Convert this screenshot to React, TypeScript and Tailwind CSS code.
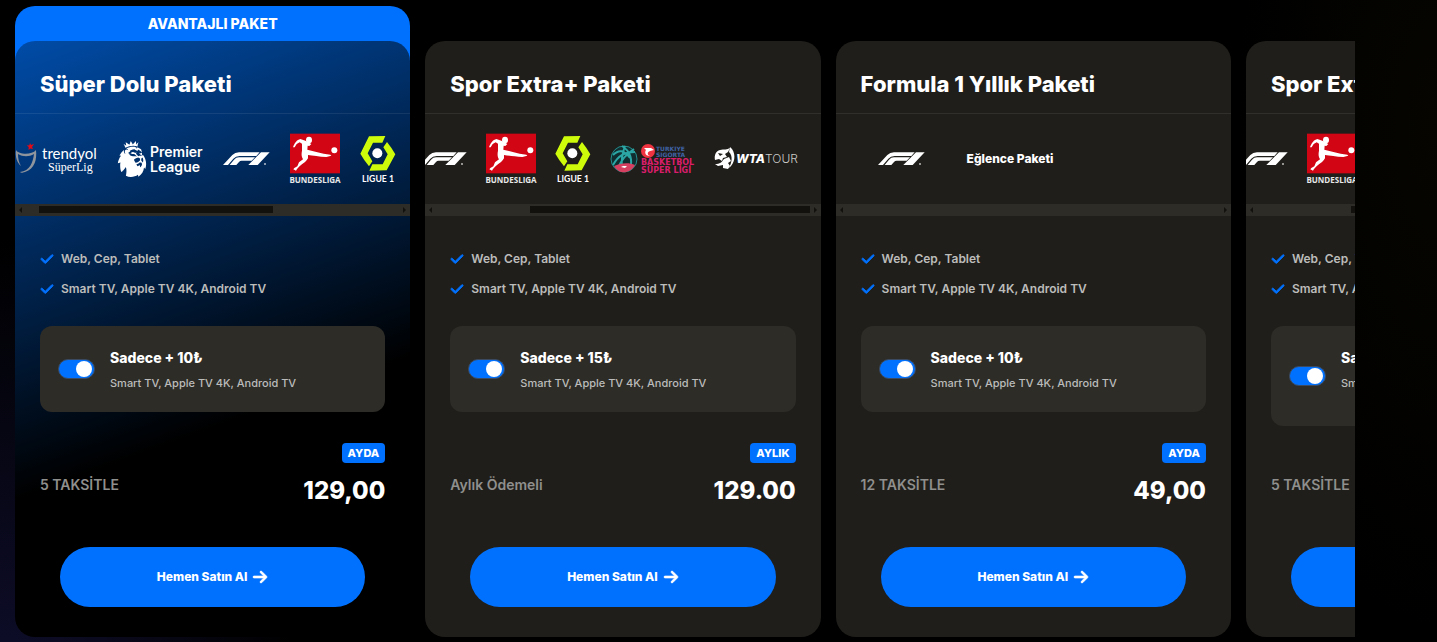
import { useId } from "react";
import type { ReactNode } from "react";
import { FaArrowRight, FaCheck } from "react-icons/fa6";
import { SiPremierleague } from "react-icons/si";

function TrendyolLogo() {
  return (
    <svg viewBox="0 0 83 34" className="h-[34px] w-[83px] shrink-0 overflow-visible" role="img" aria-label="Trendyol Süper Lig">
      <path d="M1 8 C4 13 17 13 21 8 C22 17 20 27 10 30 C7 31 6 31 5 30 C15 29 18 20 19 12 C14 15 8 15 3 12 C3 17 4 21 6 24 C2 21 0 14 1 8 Z" fill="#8f959d" />
      <path d="m15 1 1 2 3-1-2 3 1 2-2.500-.5-2 1.500.200-3-2-1.500 2.600-.3z" fill="#e30a17" />
      <text x="27" y="17" fontSize="15" fill="#fff" fontFamily="Lato, sans-serif">trendyol</text>
      <text x="33" y="29" fontSize="12" fill="#fff" fontFamily="'Liberation Serif', serif">SüperLig</text>
    </svg>
  );
}

function PremierLeagueLogo() {
  return (
    <div className="flex w-[85px] shrink-0 items-center text-white" role="img" aria-label="Premier League">
      <SiPremierleague className="-ml-1 size-9 shrink-0" />
      <span className="text-[14px] leading-[15px] font-semibold">
        Premier
        <br />
        League
      </span>
    </div>
  );
}

function FormulaLogo() {
  return (
    <svg viewBox="0 0 141 40" className="h-[14px] w-[47px] shrink-0" fill="#fff" role="img" aria-label="Formula 1">
      <path d="M0 38 28 8Q36 0 48 0H110L100 11H50Q38 11 31 19L15 38Z" />
      <path d="M20 38 33 22Q39 15 48 15H96L86 25H56Q51 25 48 29L40 38Z" />
      <path d="M114 0H140L104 38H76Z" />
      <circle cx="126" cy="35" r="3" opacity=".7" />
    </svg>
  );
}

function BundesligaLogo() {
  return (
    <svg viewBox="0 0 150 156" className="h-[52px] w-[50px] shrink-0 overflow-visible" role="img" aria-label="Bundesliga">
      <rect y="2" width="150" height="119" fill="#d20515" />
      <g fill="#fff" transform="translate(0 2)">
        <ellipse cx="57" cy="19" rx="9" ry="10" />
        <path d="M9 41 C13 29 21 18 31 16 L46 21 Q55 25 64 31 L58 37 L53 36 L52 48 C68 51 84 57 101 60 L121 63 L124 66 L109 70 C88 69 68 66 54 64 L54 74 C49 83 42 88 34 93 C29 96 25 102 21 106 L18 111 L10 107 L13 103 L22 98 L27 86 L39 77 C34 69 34 60 36 51 L36 30 L29 26 L20 31 L14 41 Z" />
        <circle cx="133" cy="50" r="9" />
      </g>
      <text x="75" y="151" textAnchor="middle" fontSize="24" fontWeight="700" fill="#e8e8e8" fontFamily="'Open Sans', sans-serif">BUNDESLIGA</text>
    </svg>
  );
}

function LigueLogo() {
  return (
    <svg viewBox="0 0 108 141" className="h-[47px] w-9 shrink-0 overflow-visible" role="img" aria-label="Ligue 1">
      <g fill="#cdfb0a">
        <path d="M27 1 76 0 67 20H39L23 52 37 76 27 91Q13 74 1 53Z" />
        <path d="M81 18Q94 34 106 55L80 103 28 104 37 85H68L83 55 70 34Z" />
      </g>
      <circle cx="52" cy="52" r="15" fill="#fff" />
      <text x="54" y="137" textAnchor="middle" fontSize="26" fontWeight="700" fill="#fff" fontFamily="Lato, sans-serif">LIGUE 1</text>
    </svg>
  );
}

function BasketbolLogo() {
  return (
    <svg viewBox="0 0 85 30" className="h-[30px] w-[85px] shrink-0 overflow-visible" role="img" aria-label="Türkiye Sigorta Basketbol Süper Ligi">
      <circle cx="14" cy="15" r="13" fill="#102d30" stroke="#248d8d" />
      <path d="M3 11C9 5 14 6 20 14M3 21C8 12 14 8 25 8M12 2C20 7 23 15 20 26M8 24C11 17 16 10 24 5M15 2C12 10 11 15 12 23" stroke="#2ba6a4" strokeWidth="2" fill="none" />
      <path d="M4 22C10 19 19 18 25 21C20 30 9 31 4 22Z" fill="#d84061" />
      <path d="m11 23 2-1h4l-2 2z" fill="#fff" />
      <circle cx="38" cy="7" r="7" fill="#ef3340" />
      <path d="M34 4h7l3 2-4 1c-3 1-3 4 0 5-4 0-6-3-4-6z" fill="#fff" />
      <g fontFamily="'DejaVu Sans', sans-serif" fontWeight="700">
        <text x="46" y="7" fontSize="6" fill="#3f63a6">TURKIYE</text>
        <text x="46" y="13" fontSize="6" fill="#3f63a6">SIGORTA</text>
        <text x="31" y="21" fontSize="8" fill="#d91d6b">BASKETBOL</text>
        <text x="31" y="29" fontSize="8" fill="#d91d6b">SÜPER LİGİ</text>
      </g>
    </svg>
  );
}

function WtaLogo() {
  return (
    <svg viewBox="0 0 84 24" className="h-6 w-[84px] shrink-0 overflow-visible" fill="#fff" role="img" aria-label="WTA Tour">
      <path d="M6 3C10 2 13 3 16 1L14 5L11 7L13 10L9 11L8 14L5 12L1 13C0 8 2 4 6 3Z" />
      <path d="M1 17C6 17 8 15 10 12L15 10L17 14L14 16L16 19L14 22L9 21L9 18L4 19Z" />
      <path d="M16 0 18 2C22 8 21 16 15 21C18 15 19 9 15 5Z" />
      <path d="m4 6 5 1-3 2z" fill="#1f1e1a" />
      <text x="22" y="16" fontSize="12" fontWeight="800" fontStyle="italic" fontFamily="Inter, sans-serif">WTA</text>
      <text x="51" y="16" fontSize="12" fontWeight="300" fill="#c9c8c6" fontFamily="Inter, sans-serif">TOUR</text>
    </svg>
  );
}

type Plan = {
  title: string;
  featured?: boolean;
  logos: ReactNode;
  thumb?: { left: number; width: number };
  extraPrice: string;
  extraDevices: string;
  tallExtra?: boolean;
  terms: string;
  period: string;
  price: string;
};

const sportLogos = (
  <div className="-ml-[5px] flex items-center gap-[19px]">
    <FormulaLogo />
    <BundesligaLogo />
    <LigueLogo />
    <BasketbolLogo />
    <WtaLogo />
  </div>
);

const plans: Plan[] = [
  {
    title: "Süper Dolu Paketi",
    featured: true,
    logos: (
      <div className="flex items-center gap-5">
        <TrendyolLogo />
        <PremierLeagueLogo />
        <FormulaLogo />
        <BundesligaLogo />
        <LigueLogo />
      </div>
    ),
    thumb: { left: 6, width: 59.2 },
    extraPrice: "Sadece + 10₺",
    extraDevices: "Smart TV, Apple TV 4K, Android TV",
    terms: "5 TAKSİTLE",
    period: "AYDA",
    price: "129,00",
  },
  {
    title: "Spor Extra+ Paketi",
    logos: sportLogos,
    thumb: { left: 26.6, width: 70.8 },
    extraPrice: "Sadece + 15₺",
    extraDevices: "Smart TV, Apple TV 4K, Android TV",
    terms: "Aylık Ödemeli",
    period: "AYLIK",
    price: "129.00",
  },
  {
    title: "Formula 1 Yıllık Paketi",
    logos: (
      <div className="flex items-center gap-[42px] pl-[42px]">
        <FormulaLogo />
        <span className="text-[12px] font-extrabold text-white">Eğlence Paketi</span>
      </div>
    ),
    extraPrice: "Sadece + 10₺",
    extraDevices: "Smart TV, Apple TV 4K, Android TV",
    terms: "12 TAKSİTLE",
    period: "AYDA",
    price: "49,00",
  },
  {
    title: "Spor Extra+ Paketi",
    logos: sportLogos,
    thumb: { left: 26.6, width: 70.8 },
    extraPrice: "Sadece + 10₺",
    extraDevices: "Smart TV, Apple TV 4K, Android TV",
    tallExtra: true,
    terms: "5 TAKSİTLE",
    period: "AYDA",
    price: "99,00",
  },
];

function ScrollTrack({ thumb }: { thumb?: { left: number; width: number } }) {
  return (
    <div className="relative flex h-3 items-center justify-between bg-[#2d2c27] px-1">
      <svg viewBox="0 0 3 6" className="h-[6px] w-[3px]" fill="#12110e" aria-hidden="true">
        <path d="M3 0v6L0 3z" />
      </svg>
      {thumb && (
        <div
          className="absolute top-[2px] h-[7px] bg-[#12110e]"
          style={{ left: `${thumb.left}%`, width: `${thumb.width}%` }}
        />
      )}
      <svg viewBox="0 0 3 6" className="h-[6px] w-[3px]" fill="#12110e" aria-hidden="true">
        <path d="M0 0v6l3-3z" />
      </svg>
    </div>
  );
}

function PlanCard({ plan }: { plan: Plan }) {
  const id = useId();
  return (
    <li className="flex shrink-0 basis-[calc((100%+14px)/3.3-15px)] flex-col">
      {plan.featured ? (
        <div className="-mb-5 h-[55px] rounded-t-[20px] bg-[#0071ff] text-center text-[14px] leading-9 font-extrabold text-white">
          AVANTAJLI PAKET
        </div>
      ) : (
        <div className="h-[35px]" />
      )}
      <article
        className={
          plan.featured
            ? "flex flex-1 flex-col overflow-hidden rounded-[20px] bg-[linear-gradient(160deg,#004ca8_0%,#000_62%)]"
            : "flex flex-1 flex-col overflow-hidden rounded-[20px] bg-[#1f1e1a]"
        }
      >
        <h2 className="border-b border-white/8 px-[25px] pt-[28px] pb-[14px] text-[22px] leading-[30px] font-extrabold whitespace-nowrap text-white">
          {plan.title}
        </h2>
        <div className="flex h-[90px] items-center overflow-hidden">{plan.logos}</div>
        <ScrollTrack thumb={plan.thumb} />

        <ul className="px-[25px] pt-[28px] text-[12px] leading-[30px] font-semibold text-[#bcbcbb]">
          {["Web, Cep, Tablet", "Smart TV, Apple TV 4K, Android TV"].map((item) => (
            <li key={item} className="flex items-center gap-[7px] whitespace-nowrap">
              <FaCheck className="size-[14px] shrink-0 text-[#0071ff]" stroke="currentColor" strokeWidth={32} />
              {item}
            </li>
          ))}
        </ul>

        <div className="mx-[25px] mt-[22px] mb-[17px] flex items-center gap-[15px] rounded-xl bg-[#2d2c27] px-[18px] py-[22px]">
          <input
            id={id}
            type="checkbox"
            defaultChecked
            className="flex h-5 w-[37px] shrink-0 appearance-none items-center rounded-full border border-[#3b4a60] bg-[#55544f] px-[2px] before:size-4 before:rounded-full before:bg-white checked:justify-end checked:bg-[#0071ff]"
          />
          <label htmlFor={id} className={plan.tallExtra ? "flex flex-col gap-2 pb-[14px]" : "flex flex-col gap-2"}>
            <span className="text-[14px] leading-5 font-extrabold text-white">{plan.extraPrice}</span>
            <span className="text-[11px] leading-[14px] font-medium whitespace-nowrap text-[#bcbcbb]">
              {plan.extraDevices}
            </span>
          </label>
        </div>

        <div className="mt-auto flex items-start justify-between px-[25px]">
          <span className="mt-8 text-[14px] leading-5 font-semibold text-[#8f8f8d]">{plan.terms}</span>
          <div className="flex flex-col items-end gap-3">
            <span className="rounded bg-[#0071ff] px-[6px] text-[11px] leading-5 font-extrabold text-white">
              {plan.period}
            </span>
            <span className="text-[24px] leading-[32px] font-extrabold text-white">{plan.price}</span>
          </div>
        </div>
        <button
          type="button"
          className="mx-[45px] mt-[40px] mb-[30px] flex h-[60px] items-center justify-center gap-[5px] rounded-full bg-[#0071ff] text-[12px] font-extrabold whitespace-nowrap text-white"
        >
          Hemen Satın Al
          <FaArrowRight className="size-4" stroke="currentColor" strokeWidth={20} />
        </button>
      </article>
    </li>
  );
}

export default function App() {
  return (
    <main className="min-h-screen bg-black bg-[radial-gradient(ellipse_300px_500px_at_0%_115%,#100f30_0%,transparent_100%),radial-gradient(ellipse_200px_500px_at_100%_20%,#060500_0%,transparent_100%)] pt-[6px] pr-[82px] pb-[5px] pl-[15px] font-['Inter','Noto_Sans',sans-serif]">
      <ul className="flex gap-[15px] overflow-hidden">
        {plans.map((plan, index) => (
          <PlanCard key={index} plan={plan} />
        ))}
      </ul>
    </main>
  );
}
